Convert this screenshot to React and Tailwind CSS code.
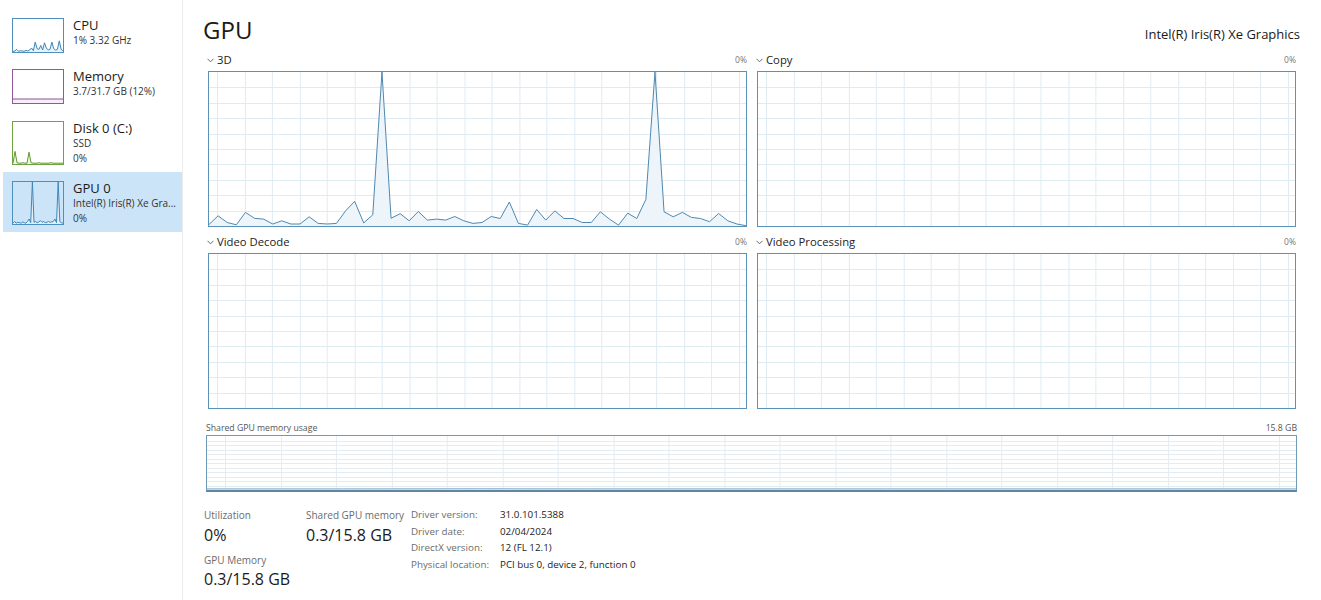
import React from 'react';

const GPU_3D = [1, 6.6, 2.3, 0.8, 8.8, 5, 4.5, 1.3, 3.4, 1.3, 1.3, 6, 1.7, 1.3, 1.7, 9.8, 16, 2, 7.3, 100, 5, 8, 3.4, 9.4, 3.8, 4.5, 3.8, 6.2, 3.4, 1.7, 2.3, 6.2, 4.9, 15.6, 1.7, 0.6, 10.7, 3.8, 9.8, 4.9, 4.9, 2.3, 2.3, 9.2, 4.5, 0.6, 8.3, 4.9, 17.3, 100, 9.2, 6, 8.8, 5.6, 4.9, 2.8, 8.1, 3.4, 1.3, 0.2];

const CPU_MINI = [2, 3, 8, 2, 4, 3, 2, 5, 3, 6, 12, 4, 30, 10, 8, 20, 6, 28, 12, 6, 8, 30, 10, 6, 8, 34, 8, 4];
const MEM_MINI = [12, 12, 12, 12, 12, 12, 12, 12, 12, 12];
const DISK_MINI = [2, 30, 3, 2, 2, 3, 2, 2, 28, 3, 2, 2, 2, 3, 2, 2, 2, 2, 2, 3, 2, 2, 2, 2, 2, 2];
const GPU_MINI = [2, 6, 2, 4, 3, 2, 5, 3, 2, 6, 12, 3, 100, 4, 6, 3, 5, 8, 4, 6, 3, 4, 6, 4, 5, 6, 12, 3, 100, 6, 3, 2];

const LINE = '#4d88b0';
const GRID = '#dfebf3';
const FILL = '#eef5fa';

function Graph({ w, h, data, vStep, vOffset, rows, grid = GRID, line = LINE, fill = FILL }) {
  const lines = [];
  if (vStep) {
    for (let x = vOffset; x < w; x += vStep) {
      const px = Math.round(x) + 0.5;
      lines.push(<line key={'v' + x} x1={px} x2={px} y1={0} y2={h} />);
    }
  }
  if (rows) {
    for (let i = 1; i < rows; i++) {
      const py = Math.round((h * i) / rows) + 0.5;
      lines.push(<line key={'h' + i} x1={0} x2={w} y1={py} y2={py} />);
    }
  }
  const pts = data
    ? data.map((v, i) => `${((i * w) / (data.length - 1)).toFixed(1)},${(h - (v / 100) * h).toFixed(1)}`).join(' ')
    : null;
  return (
    <svg viewBox={`0 0 ${w} ${h}`} preserveAspectRatio="none" className="block w-full h-full">
      <g stroke={grid} strokeWidth="1">{lines}</g>
      {pts && <polygon points={`0,${h} ${pts} ${w},${h}`} fill={fill} />}
      {pts && <polyline points={pts} fill="none" stroke={line} strokeWidth="1" strokeLinejoin="round" />}
    </svg>
  );
}

const Chevron = () => (
  <svg width="7" height="5" viewBox="0 0 7 5" className="mr-[3px]">
    <path d="M0.5 0.8 L3.5 3.8 L6.5 0.8" fill="none" stroke="#666" strokeWidth="1" />
  </svg>
);

function ChartCell({ label, pct = '0%', data }) {
  return (
    <div className="flex flex-col">
      <div className="flex items-center justify-between h-[14px]">
        <div className="flex items-center text-[11.3px] text-[#222]">
          <Chevron />
          <span>{label}</span>
        </div>
        <span className="text-[8.5px] text-[#777]">{pct}</span>
      </div>
      <div className="mt-[4px] h-[156px] ml-px border border-[#5b92b8]">
        <Graph w={538} h={154} data={data} vStep={27.5} vOffset={8} rows={10} />
      </div>
    </div>
  );
}

function SideItem({ title, lines, data, border, line, fill, selected, h, pt }) {
  const tall = lines.length > 1;
  return (
    <div
      className={`flex gap-[9px] ${selected ? 'bg-[#cce4f7] ml-[3px] pl-[9px]' : 'pl-[12px]'}`}
      style={{ height: h, paddingTop: pt }}
    >
      <div className="mt-[1px] w-[52px] shrink-0 border" style={{ borderColor: border, height: tall ? 44 : 35 }}>
        <Graph w={50} h={tall ? 42 : 33} data={data} line={line} fill={fill} />
      </div>
      <div className="flex flex-col min-w-0">
        <span className="text-[13px] leading-[16px] text-[#1a1a1a]">{title}</span>
        {lines.map((l) => (
          <span key={l} className="text-[10px] leading-[14.5px] text-[#333] whitespace-nowrap">{l}</span>
        ))}
      </div>
    </div>
  );
}

export default function App() {
  return (
    <div className="w-[1321px] h-[600px] bg-white flex overflow-hidden" style={{ fontFamily: '"Open Sans", "Noto Sans", sans-serif' }}>
      {/* Sidebar */}
      <div className="w-[183px] border-r border-[#ececec] pt-[12px] flex flex-col shrink-0">
        <SideItem title="CPU" lines={['1% 3.32 GHz']} data={CPU_MINI} border="#4d8fbd" line="#3f86b8" fill="#e8f2fa" h={52} pt={5} />
        <SideItem title="Memory" lines={['3.7/31.7 GB (12%)']} data={MEM_MINI} border="#93579f" line="#8b4d99" fill="#f5eef7" h={52} pt={4} />
        <SideItem title="Disk 0 (C:)" lines={['SSD', '0%']} data={DISK_MINI} border="#6ea444" line="#5e9a2f" fill="#f0f7ea" h={56} pt={4} />
        <SideItem title="GPU 0" lines={['Intel(R) Iris(R) Xe Gra...', '0%']} data={GPU_MINI} border="#4d8fbd" line="#3f86b8" fill="#e3eff8" h={60} pt={8} selected />
      </div>

      {/* Main */}
      <div className="flex-1 pl-[20px] pr-[21px] pt-[14px] flex flex-col">
        <div className="flex items-baseline justify-between h-[32px]">
          <span className="text-[24px] leading-[32px] text-[#1a1a1a]">GPU</span>
          <span className="text-[13px] text-[#1a1a1a]">Intel(R) Iris(R) Xe Graphics</span>
        </div>

        <div className="mt-[7px] px-[4px] grid grid-cols-2 gap-x-[9px] gap-y-[8px]">
          <ChartCell label="3D" data={GPU_3D} />
          <ChartCell label="Copy" />
          <ChartCell label="Video Decode" />
          <ChartCell label="Video Processing" />
        </div>

        <div className="mt-[13px] px-[3px] flex flex-col">
          <div className="flex justify-between text-[8.7px] leading-[12px] text-[#555]">
            <span>Shared GPU memory usage</span>
            <span>15.8 GB</span>
          </div>
          <div className="mt-[1px] h-[57px] border border-[#6f9bbb] border-b-2 border-b-[#5d87a3]">
            <Graph w={1090} h={54} data={[2, 2, 2.2, 2, 2, 2.1, 2, 2, 2]} vStep={55.5} vOffset={18} rows={12} grid="#e4ecf2" line="#7ea6c2" fill="#eef4f8" />
          </div>
        </div>

        <div className="mt-[16px] pl-px flex">
          <div className="w-[102px] flex flex-col">
            <span className="text-[10px] leading-[14px] text-[#6b6b6b]">Utilization</span>
            <span className="mt-[2px] text-[16px] leading-[22px] text-[#1a1a1a]">0%</span>
            <span className="mt-[7px] text-[10px] leading-[14px] text-[#6b6b6b]">GPU Memory</span>
            <span className="mt-[1px] text-[16px] leading-[22px] text-[#1a1a1a]">0.3/15.8 GB</span>
          </div>
          <div className="w-[105px] flex flex-col">
            <span className="text-[10px] leading-[14px] text-[#6b6b6b] whitespace-nowrap">Shared GPU memory</span>
            <span className="mt-[2px] text-[16px] leading-[22px] text-[#1a1a1a]">0.3/15.8 GB</span>
          </div>
          <div className="flex flex-col text-[9.8px] leading-[16.7px] -mt-[1px]">
            {[
              ['Driver version:', '31.0.101.5388'],
              ['Driver date:', '02/04/2024'],
              ['DirectX version:', '12 (FL 12.1)'],
              ['Physical location:', 'PCI bus 0, device 2, function 0'],
            ].map(([k, v]) => (
              <div key={k} className="flex">
                <span className="w-[89px] text-[#6b6b6b]">{k}</span>
                <span className="text-[#222]">{v}</span>
              </div>
            ))}
          </div>
        </div>
      </div>
    </div>
  );
}
